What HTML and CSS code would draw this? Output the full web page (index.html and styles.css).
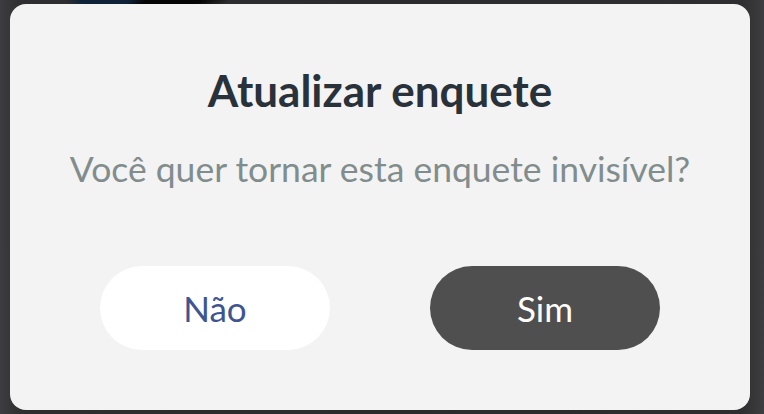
FILE: index.html
```html
<!DOCTYPE html>
<html lang="pt-BR">
<head>
<meta charset="utf-8">
<title>Atualizar enquete</title>
<link rel="stylesheet" href="styles.css">
</head>
<body>
<div class="overlay">
  <div class="dialog">
    <h1 class="title">Atualizar enquete</h1>
    <p class="message">Você quer tornar esta enquete invisível?</p>
    <div class="actions">
      <button class="btn btn-no">Não</button>
      <button class="btn btn-yes">Sim</button>
    </div>
  </div>
</div>
</body>
</html>
```
FILE: styles.css
```css
html, body {
  margin: 0;
  padding: 0;
  height: 100%;
}
body {
  font-family: Lato, "Noto Sans", sans-serif;
  background:
    radial-gradient(ellipse 40px 10px at 105px 0px, #0d2236 0%, #0d2236 60%, rgba(13,34,54,0) 100%),
    radial-gradient(ellipse 70px 10px at 160px 0px, #050505 0%, #050505 60%, rgba(5,5,5,0) 100%),
    linear-gradient(90deg, #3d3d41 0%, #2e2e30 3%, #2b2b2d 50%, #2e2e30 97%, #3e3e42 100%);
  overflow: hidden;
}
.overlay {
  box-sizing: border-box;
  height: 414px;
  padding: 4px 14px 4px 10px;
  display: flex;
}
.dialog {
  flex: 1;
  background: #f3f3f3;
  border-radius: 16px;
  display: flex;
  flex-direction: column;
  align-items: center;
  padding-top: 60px;
  box-sizing: border-box;
}
.title {
  margin: 0;
  font-size: 44px;
  line-height: 52px;
  font-weight: 700;
  color: #29313a;
}
.message {
  margin: 32px 0 0;
  font-size: 35.5px;
  line-height: 42px;
  font-weight: 400;
  color: #818d8d;
}
.actions {
  margin-top: 76px;
  display: flex;
  gap: 100px;
}
.btn {
  width: 230px;
  height: 84px;
  border: none;
  border-radius: 42px;
  font-family: Lato, "Noto Sans", sans-serif;
  font-size: 35px;
  font-weight: 400;
  padding: 0;
}
.btn-no {
  background: #ffffff;
  color: #3e5592;
}
.btn-yes {
  background: #4f4f4f;
  color: #ffffff;
}
```
